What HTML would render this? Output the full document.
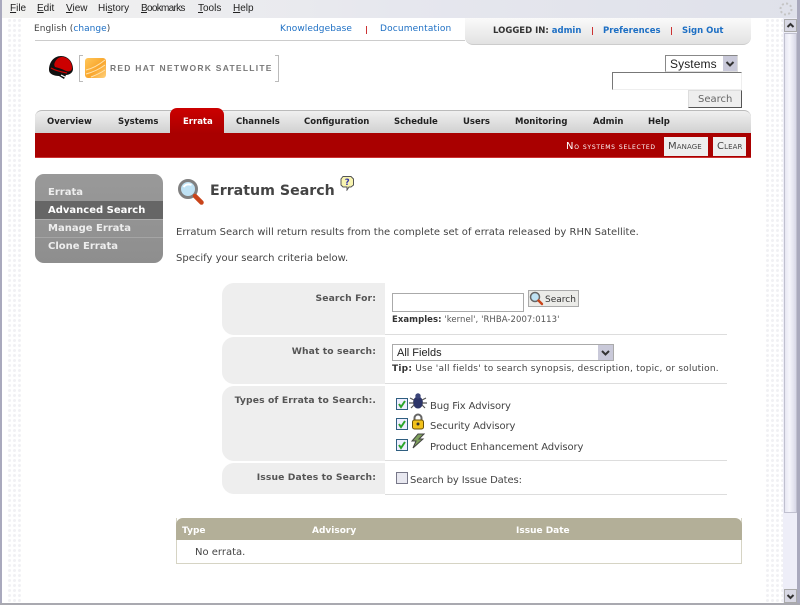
<!DOCTYPE html>
<html><head><meta charset="utf-8"><style>
html,body{margin:0;padding:0}
body{width:800px;height:605px;position:relative;overflow:hidden;background:#fff;font-family:"DejaVu Sans",sans-serif;font-size:9px;color:#444}
.a{position:absolute}
.t{position:absolute;white-space:nowrap;line-height:12px}
.b{font-weight:bold}
.m{font-family:"Liberation Sans",sans-serif;font-size:10px;color:#222;top:3px;line-height:12px;position:absolute}
.m u{text-decoration:underline}
.nav{position:absolute;top:116px;line-height:12px;font-weight:bold;font-size:8.5px;color:#222;white-space:nowrap}
.side{position:absolute;left:48px;font-weight:bold;font-size:10px;line-height:12px;color:#eee;white-space:nowrap}
.l{color:#1d6fc4}
.lab{position:absolute;right:424px;font-weight:bold;color:#555;white-space:nowrap;line-height:12px;font-size:9.2px;letter-spacing:.12px}
.dots{position:absolute;top:18px;bottom:2px;background-image:radial-gradient(circle,#f1f1f4 1.4px,transparent 1.6px);background-size:5px 5px}
.cb{position:absolute;width:10px;height:10px;border:1px solid #2f5f80;background:#eef;left:396px}
.cb svg{position:absolute;left:0;top:0}
.sep{position:absolute;left:385px;width:342px;height:1px;background:#ddd}
.rowbg{position:absolute;left:222px;width:163px;background:#eee;border-radius:12px 0 0 12px}
.th{position:absolute;white-space:nowrap;line-height:12px;top:525px;font-weight:bold;color:#fff;font-size:9px}
.chk{position:absolute;left:430px;white-space:nowrap;line-height:12px;font-size:10px;letter-spacing:-.12px}
</style></head><body>
<!-- window chrome -->
<div class="a" style="left:0;top:0;width:800px;height:18px;background:linear-gradient(90deg,#f2f2f0,#e6e7ee 50%,#dfe1ea)"></div>
<div class="a" style="left:0;top:0;width:2px;height:605px;background:#a9a9bd"></div>
<div class="a" style="left:797px;top:0;width:3px;height:605px;background:#a9a9bd"></div>
<div class="a" style="left:0;top:603px;width:800px;height:2px;background:#a9a9b0"></div>
<div class="m" style="left:10px"><u>F</u>ile</div>
<div class="m" style="left:37px"><u>E</u>dit</div>
<div class="m" style="left:66px"><u>V</u>iew</div>
<div class="m" style="left:98px">Hi<u>s</u>tory</div>
<div class="m" style="left:141px;letter-spacing:-.7px"><u>B</u>ookmarks</div>
<div class="m" style="left:198px"><u>T</u>ools</div>
<div class="m" style="left:233px"><u>H</u>elp</div>
<svg class="a" style="left:778px;top:1px" width="16" height="16"><circle cx="8" cy="8" r="5.5" fill="none" stroke="#c4c4c4" stroke-width="2" stroke-dasharray="2 2.3"/></svg>
<!-- dotted margins -->
<div class="dots" style="left:7px;width:15px"></div>
<div class="dots" style="left:765px;width:18px"></div>
<!-- scrollbar -->
<div class="a" style="left:783px;top:18px;width:14px;height:585px;background:#eeeef8"></div>
<div class="a" style="left:784px;top:19px;width:13px;height:13px;background:#d8d8e4;border:1px solid #aaa;box-sizing:border-box"></div>
<svg class="a" style="left:784px;top:19px" width="13" height="13"><path d="M3.5 8L6.5 5L9.5 8" fill="none" stroke="#333" stroke-width="2"/></svg>
<div class="a" style="left:784px;top:33px;width:13px;height:480px;background:linear-gradient(90deg,#e6e6f2,#f6f6fc 40%,#d8d8e8);border:1px solid #c0c0cf;box-sizing:border-box"></div>
<div class="a" style="left:784px;top:589px;width:13px;height:14px;background:#d8d8e4;border:1px solid #aaa;box-sizing:border-box"></div>
<svg class="a" style="left:784px;top:590px" width="13" height="13"><path d="M3.5 5L6.5 8L9.5 5" fill="none" stroke="#333" stroke-width="2"/></svg>
<!-- top bar -->
<div class="t" style="left:34px;top:23px;letter-spacing:.05px">English (<span class="l">change</span>)</div>
<div class="a" style="left:35px;top:40px;width:430px;height:1px;background:#ccc"></div>
<div class="t l" style="left:280px;top:23px;letter-spacing:.08px">Knowledgebase</div>
<div class="a" style="left:366px;top:26px;width:1px;height:8px;background:#c33"></div>
<div class="t l" style="left:380px;top:23px;letter-spacing:.15px">Documentation</div>
<div class="a" style="left:465px;top:18px;width:286px;height:27px;border-radius:0 0 8px 8px;background:linear-gradient(#fafafa,#e2e2e2);border-bottom:1px solid #ccc;box-sizing:border-box"></div>
<div class="t b" style="left:493px;top:25px;color:#333;font-size:8.5px">LOGGED IN: <span class="l">admin</span></div>
<div class="a" style="left:592px;top:27px;width:1px;height:8px;background:#c33"></div>
<div class="t b l" style="left:603px;top:25px;font-size:8.5px">Preferences</div>
<div class="a" style="left:671px;top:27px;width:1px;height:8px;background:#c33"></div>
<div class="t b l" style="left:682px;top:25px;font-size:8.5px">Sign Out</div>
<!-- logo -->
<svg class="a" style="left:47px;top:55px" width="28" height="25"><path d="M2 15C2 7 7 1 14 1C21 1 26 7 26 14C26 18 22 20 19 20L17 24L12 21C7 21 2 19 2 15Z" fill="#111"/><path d="M8 7C10 3 13 2 15 2C21 2 25 7 25 13C25 16 22 17 19 16C15 14 12 13 8 12C7 10 7 9 8 7Z" fill="#cc0000"/><path d="M4 13C9 16 15 17 20 18" fill="none" stroke="#c00" stroke-width="1.3"/><path d="M14 20L18 22" stroke="#fff" stroke-width="1.2"/></svg>
<div class="a" style="left:79px;top:55px;width:3px;height:25px;border:1px solid #bbb;border-right:0"></div>
<div class="a" style="left:85px;top:58px;width:21px;height:20px;border-radius:3px;background:linear-gradient(135deg,#ffc75a,#f9a62d 55%,#ffd27f)"></div>
<svg class="a" style="left:85px;top:58px" width="21" height="20"><path d="M1 12Q10 10 20 2M1 16Q12 13 20 7M6 19Q14 16 20 12" fill="none" stroke="#ffe3ad" stroke-width="1"/></svg>
<div class="t b" style="left:110px;top:62px;font-size:8.5px;color:#777;letter-spacing:1.25px;font-family:'Liberation Sans',sans-serif">RED HAT NETWORK SATELLITE</div>
<div class="a" style="left:275px;top:55px;width:3px;height:25px;border:1px solid #bbb;border-left:0"></div>
<!-- search box -->
<div class="a" style="left:665px;top:55px;width:73px;height:17px;border:1px solid #888;border-bottom-color:#ddd;border-right-color:#ddd;box-sizing:border-box;background:#fff"></div>
<div class="t" style="left:670px;top:58px;font-family:'Liberation Sans',sans-serif;font-size:12px;color:#222;letter-spacing:.1px">Systems</div>
<div class="a" style="left:723px;top:56px;width:14px;height:15px;background:#c9c9d9"></div>
<svg class="a" style="left:723px;top:56px" width="14" height="15"><path d="M3.5 6L7 9.5L10.5 6" fill="none" stroke="#333" stroke-width="2"/></svg>
<div class="a" style="left:612px;top:72px;width:130px;height:18px;border:1px solid #777;border-right-color:#eee;border-bottom-color:#eee;box-sizing:border-box;background:#fff"></div>
<div class="a" style="left:688px;top:90px;width:54px;height:18px;background:#eee;border:1px solid #ddd;border-right:1px solid #555;border-bottom:1px solid #555;box-sizing:border-box"></div>
<div class="t" style="left:698px;top:94px;font-size:10px;color:#666">Search</div>
<!-- nav -->
<div class="a" style="left:35px;top:110px;width:716px;height:24px;border-radius:7px 7px 0 0;background:linear-gradient(#f0f0f0,#cfcfcf);border-top:1px solid #bbb;box-sizing:border-box"></div>
<div class="a" style="left:35px;top:133px;width:716px;height:25px;background:#a90000;border-bottom:1px solid #c33;box-sizing:border-box"></div>
<div class="a" style="left:170px;top:108px;width:54px;height:26px;border-radius:7px 7px 0 0;background:linear-gradient(#cc0000,#a80000)"></div>
<div class="nav" style="left:47px">Overview</div>
<div class="nav" style="left:118px">Systems</div>
<div class="nav" style="left:183px;color:#fff">Errata</div>
<div class="nav" style="left:236px">Channels</div>
<div class="nav" style="left:304px">Configuration</div>
<div class="nav" style="left:394px">Schedule</div>
<div class="nav" style="left:463px">Users</div>
<div class="nav" style="left:515px">Monitoring</div>
<div class="nav" style="left:593px">Admin</div>
<div class="nav" style="left:648px">Help</div>
<div class="t" style="left:566px;top:141px;color:#fff;font-size:8px;font-variant:small-caps;letter-spacing:.72px"><span style="font-size:10px">N</span>o systems selected</div>
<div class="a" style="left:664px;top:137px;width:44px;height:19px;background:#eee"></div>
<div class="t" style="left:668px;top:141px;color:#444;font-size:7px;letter-spacing:.1px"><span style="font-size:10px">M</span>ANAGE</div>
<div class="a" style="left:713px;top:137px;width:33px;height:19px;background:#eee"></div>
<div class="t" style="left:717px;top:141px;color:#444;font-size:7px;letter-spacing:.1px"><span style="font-size:10px">C</span>LEAR</div>
<!-- sidebar -->
<div class="a" style="left:35px;top:174px;width:128px;height:89px;border-radius:9px;background:linear-gradient(#999,#8e8e8e)"></div>
<div class="a" style="left:35px;top:201px;width:128px;height:18px;background:#666"></div>
<div class="a" style="left:35px;top:219px;width:128px;height:1px;background:#aaa"></div>
<div class="a" style="left:35px;top:237px;width:128px;height:1px;background:#a5a5a5"></div>
<div class="side" style="top:187px">Errata</div>
<div class="side" style="top:205px;color:#fff">Advanced Search</div>
<div class="side" style="top:223px">Manage Errata</div>
<div class="side" style="top:241px">Clone Errata</div>
<!-- heading -->
<svg class="a" style="left:178px;top:179px" width="26" height="26"><circle cx="10" cy="10" r="8.5" fill="#bfe2f4" stroke="#808080" stroke-width="3"/><path d="M5.5 8Q8.5 4 13.5 6" stroke="#fff" stroke-width="2" fill="none"/><path d="M17 17L23.5 23.5" stroke="#c9441a" stroke-width="4.5" stroke-linecap="round"/></svg>
<div class="t b" style="left:210px;top:182px;font-size:14.2px;line-height:19px;color:#444">Erratum Search</div>
<svg class="a" style="left:340px;top:175px" width="15" height="16"><path d="M3 1.5H11L13.5 4V10L11 12H9L7 15V12H3L1 10V4Z" fill="#f8f4b0" stroke="#555" stroke-width="1"/><text x="7.2" y="10" font-size="8.5" font-weight="bold" text-anchor="middle" fill="#33a" font-family="DejaVu Sans">?</text></svg>
<div class="t" style="left:176px;top:227px;font-size:10px">Erratum Search will return results from the complete set of errata released by RHN Satellite.</div>
<div class="t" style="left:176px;top:253px;font-size:10px">Specify your search criteria below.</div>
<!-- form -->
<div class="rowbg" style="top:283px;height:52px"></div>
<div class="rowbg" style="top:337px;height:47px"></div>
<div class="rowbg" style="top:386px;height:75px"></div>
<div class="rowbg" style="top:463px;height:31px"></div>
<div class="sep" style="top:334px"></div>
<div class="sep" style="top:383px"></div>
<div class="sep" style="top:460px"></div>
<div class="sep" style="top:494px"></div>
<div class="lab" style="top:293px">Search For:</div>
<div class="lab" style="top:346px">What to search:</div>
<div class="lab" style="top:395px">Types of Errata to Search:.</div>
<div class="lab" style="top:472px">Issue Dates to Search:</div>
<div class="a" style="left:392px;top:293px;width:132px;height:19px;border:1px solid #aaa;box-sizing:border-box;background:#fff"></div>
<div class="a" style="left:528px;top:290px;width:51px;height:17px;background:#ebebe8;border:1px solid #aaa;box-sizing:border-box"></div>
<svg class="a" style="left:529px;top:291px" width="15" height="15"><circle cx="6" cy="6" r="4.5" fill="#bfe2f4" stroke="#666" stroke-width="1.5"/><path d="M9.5 9.5L13 13" stroke="#c9441a" stroke-width="2.4" stroke-linecap="round"/></svg>
<div class="t" style="left:545px;top:294px;color:#333">Search</div>
<div class="t" style="left:392px;top:314px;font-size:8.5px;color:#555;letter-spacing:.05px"><b style="color:#333">Examples:</b> 'kernel', 'RHBA-2007:0113'</div>
<div class="a" style="left:392px;top:344px;width:222px;height:17px;border:1px solid #aaa;box-sizing:border-box;background:#fff"></div>
<div class="t" style="left:397px;top:347px;font-family:'Liberation Sans',sans-serif;font-size:11px;color:#222">All Fields</div>
<div class="a" style="left:598px;top:345px;width:15px;height:15px;background:#c9c9d9"></div>
<svg class="a" style="left:598px;top:345px" width="15" height="15"><path d="M4 6L7.5 9.5L11 6" fill="none" stroke="#333" stroke-width="2"/></svg>
<div class="t" style="left:392px;top:363px;letter-spacing:.22px"><b style="color:#333">Tip:</b> Use 'all fields' to search synopsis, description, topic, or solution.</div>
<!-- checkboxes -->
<div class="cb" style="top:398px"><svg width="10" height="10"><path d="M2 5L4 8L8 2" fill="none" stroke="#2aa52a" stroke-width="2"/></svg></div>
<div class="cb" style="top:418px"><svg width="10" height="10"><path d="M2 5L4 8L8 2" fill="none" stroke="#2aa52a" stroke-width="2"/></svg></div>
<div class="cb" style="top:439px"><svg width="10" height="10"><path d="M2 5L4 8L8 2" fill="none" stroke="#2aa52a" stroke-width="2"/></svg></div>
<svg class="a" style="left:409px;top:392px" width="18" height="18"><ellipse cx="9" cy="10.5" rx="5" ry="6" fill="#2c3468"/><circle cx="9" cy="4" r="2.7" fill="#3a4478"/><path d="M1 6L5 8M17 6L13 8M0 11H5M18 11H13M2 16L5 13M16 16L13 13" stroke="#555" stroke-width="1.2"/></svg>
<svg class="a" style="left:411px;top:413px" width="14" height="17"><path d="M3.5 8V5A3.5 3.5 0 0 1 10.5 5V8" fill="none" stroke="#666" stroke-width="2"/><rect x="1.5" y="7" width="11" height="9" rx="2" fill="#f3c21c" stroke="#6a5208"/><circle cx="7" cy="11" r="1.5" fill="#333"/></svg>
<svg class="a" style="left:410px;top:433px" width="15" height="17"><path d="M8 1H14L9 6H13L3 15L6 8H2Z" fill="#7ea05c" stroke="#444" stroke-width="1"/></svg>
<div class="chk" style="top:401px">Bug Fix Advisory</div>
<div class="chk" style="top:421px">Security Advisory</div>
<div class="chk" style="top:442px">Product Enhancement Advisory</div>
<div class="a" style="left:396px;top:472px;width:12px;height:12px;border:1px solid #778;background:#e8e8f0;box-sizing:border-box"></div>
<div class="chk" style="left:410px;top:475px">Search by Issue Dates:</div>
<!-- table -->
<div class="a" style="left:176px;top:518px;width:566px;height:46px;border:1px solid #d6d4c4;border-top:0;box-sizing:border-box"></div>
<div class="a" style="left:176px;top:518px;width:566px;height:22px;background:#b3af98;border-radius:7px 7px 0 0"></div>
<div class="th" style="left:182px">Type</div>
<div class="th" style="left:312px">Advisory</div>
<div class="th" style="left:516px">Issue Date</div>
<div class="t" style="left:195px;top:547px;font-size:10px">No errata.</div>
</body></html>
